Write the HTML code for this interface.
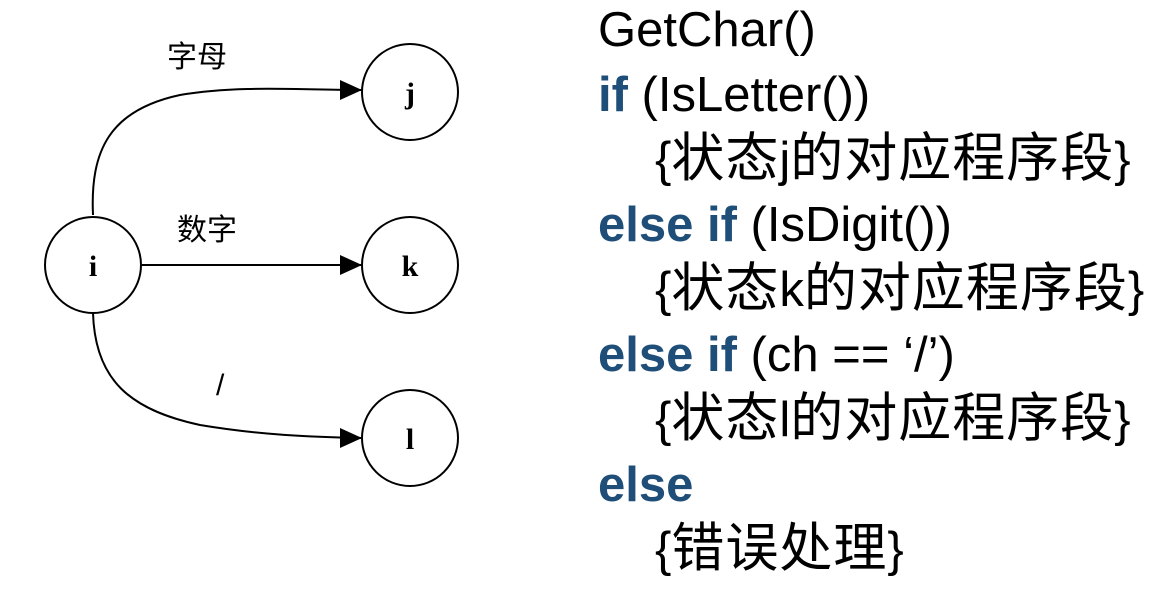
<!DOCTYPE html><html><head><meta charset="utf-8"><style>
body{margin:0;width:1170px;height:598px;background:#fff;position:relative;overflow:hidden}
.l{position:absolute;left:598px;font-family:"Liberation Sans","Noto Sans CJK SC",sans-serif;font-size:49px;line-height:60px;height:60px;color:#000;white-space:nowrap}
.i{left:655px;margin-top:-6px}
.z{font-family:"Noto Sans CJK SC",sans-serif;font-size:53px;letter-spacing:1px}
.b{color:#1f4e79;font-weight:bold}
</style></head><body>
<svg width="600" height="598" style="position:absolute;left:0;top:0">
<g fill="none" stroke="#000" stroke-width="2">
<circle cx="93" cy="265" r="48"/><circle cx="410" cy="92" r="48"/><circle cx="410" cy="265" r="48"/><circle cx="410" cy="438" r="48"/>
<path d="M93,215 C90,150 110,110 180,95 C240,85 300,90 362,90" />
<path d="M142,265 L362,265"/>
<path d="M93,313 C95,380 130,410 200,425 C260,435 310,437 362,438"/>
</g>
<path d="M340,80 L362,90 L340,100z M340,255 L362,265 L340,275z M340,428 L362,438 L340,448z" fill="#000"/>
<g font-family="Liberation Serif,serif" font-weight="bold" font-size="30" text-anchor="middle">
<text x="93" y="276">i</text><text x="410" y="103">j</text><text x="410" y="276">k</text><text x="410" y="449">l</text></g>
<g font-family="Noto Sans CJK SC,sans-serif" font-size="30">
<text x="167" y="67">字母</text><text x="177" y="240">数字</text><text x="216" y="395" font-family="Liberation Sans,sans-serif">/</text></g>
</svg>
<div class="l" style="top:0px">GetChar()</div>
<div class="l" style="top:65px"><span class="b">if</span> (IsLetter())</div>
<div class="l i" style="top:130px">{<span class="z">状态</span>j<span class="z">的对应程序段</span>}</div>
<div class="l" style="top:195px"><span class="b">else if</span> (IsDigit())</div>
<div class="l i" style="top:260px">{<span class="z">状态</span>k<span class="z">的对应程序段</span>}</div>
<div class="l" style="top:325px"><span class="b">else if</span> (ch == ‘/’)</div>
<div class="l i" style="top:390px">{<span class="z">状态</span>l<span class="z">的对应程序段</span>}</div>
<div class="l" style="top:455px"><span class="b">else</span></div>
<div class="l i" style="top:520px">{<span class="z">错误处理</span>}</div>
</body></html>
